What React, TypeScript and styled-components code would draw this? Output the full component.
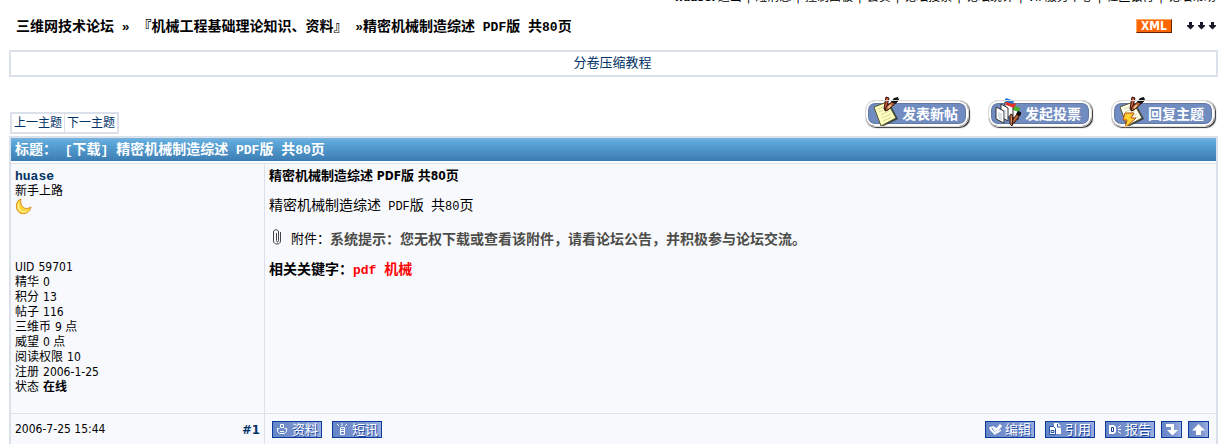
import React from "react";
import styled, { createGlobalStyle } from "styled-components";

const cjk = `"Noto Sans CJK SC", sans-serif`;
const line = "#dae1eb";
const navy = "#003366";

const GlobalStyle = createGlobalStyle`
  *, *::before, *::after { box-sizing: border-box; }
  body {
    margin: 0;
    background: #fff;
    color: #000;
    font: 12px/15px "DejaVu Sans Condensed", ${cjk};
    overflow-x: hidden;
  }
  a { color: inherit; text-decoration: none; }
  h1, h2, p, ul, dl, dd { margin: 0; padding: 0; }
  button { font: inherit; cursor: pointer; }
`;

const Page = styled.div`
  padding: 0 7px 0 9px;
`;

const UserNav = styled.nav`
  display: flex;
  justify-content: flex-end;
  gap: 5px;
  height: 16px;
  margin-top: -10px;
  padding-right: 2px;
  line-height: 15px;
  white-space: nowrap;
`;

const UserName = styled.strong`
  margin-right: -3px;
`;

const Header = styled.header`
  display: flex;
  justify-content: space-between;
  align-items: center;
  height: 40px;
  padding: 0 1px 0 7px;
`;

const Crumbs = styled.nav`
  font-family: ${cjk};
  font-size: 14px;
  font-weight: 700;
  line-height: 20px;
  white-space: pre;
`;

const Latin = styled.span<{ $size?: number }>`
  font-family: "Liberation Mono", monospace;
  font-size: ${(p) => p.$size ?? 13}px;
`;

const Feeds = styled.div`
  display: flex;
  align-items: center;
  gap: 15px;
`;

const XmlBadge = styled.a`
  display: block;
  width: 36px;
  height: 14px;
  background: #ff6600;
  border: 1px solid #ffaa66;
  border-right-color: #662200;
  border-bottom-color: #662200;
  color: #fff;
  font: 700 12px/12px "DejaVu Sans Condensed", sans-serif;
  text-align: center;
`;

const Notice = styled.section`
  height: 27px;
  margin-top: 4px;
  padding-right: 2px;
  border: 2px solid ${line};
  color: ${navy};
  font: 13px/20px ${cjk};
  text-align: center;
`;

const Toolbar = styled.div`
  display: flex;
  justify-content: space-between;
  align-items: flex-end;
  height: 59px;
  padding: 0 4px 1px 1px;
`;

const Pager = styled.nav`
  display: flex;
  border: 2px solid ${line};
  color: ${navy};
  line-height: 18px;
  margin-bottom: 1px;
`;

const PagerLink = styled.a`
  padding: 1px 2px 0;
  line-height: 17px;
  & + & { border-left: 1px solid ${line}; }
`;

const Actions = styled.div`
  display: flex;
  gap: 21px;
  margin-bottom: 9px;
`;

const ActionButton = styled.button`
  display: flex;
  align-items: center;
  width: 102px;
  height: 25px;
  padding: 0 0 2px;
  border: 2px solid #fff;
  border-radius: 9px;
  outline: 1px solid #d8d8d8;
  background: #708cc0;
  box-shadow: inset 0 0 0 1px #6478a4, 1px 1px 1px 1px #333;
  color: #fff;
  font: 700 14px/18px ${cjk};
  white-space: nowrap;
  svg { flex: none; margin: -2px 3px 0 2px; overflow: visible; }
`;

const Thread = styled.main`
  border: 2px solid ${line};
  border-bottom: 0;
  background: #f8f9fd;
`;

const ThreadTitle = styled.h1`
  height: 23px;
  padding-left: 4px;
  background: linear-gradient(#78b3dd 0, #5ca7d9 4px, #3c7db3 100%);
  color: #fff;
  font: 700 14px/20px ${cjk};
  white-space: pre;
`;

const Post = styled.article`
  display: grid;
  grid-template-columns: 254px 1fr;
  grid-template-rows: 250px 31px;
  border-top: 1px solid #fff;
  box-shadow: inset 0 1px 0 ${line};
  margin-top: 1px;
`;

const Author = styled.aside`
  padding: 6px 4px 0;
  border-right: 1px solid ${line};
`;

const AuthorName = styled.a`
  display: block;
  color: ${navy};
  font: 700 13px/15px "Liberation Mono", monospace;
`;

const Moon = styled.svg`
  display: block;
  width: 17px;
  height: 17px;
`;

const Stats = styled.dl`
  padding-top: 44px;
`;

const Stat = styled.div`
  display: flex;
  gap: 4px;
  white-space: pre;
`;

const StatValue = styled.dd<{ $bold?: boolean }>`
  font-weight: ${(p) => (p.$bold ? 700 : 400)};
`;

const Content = styled.section`
  padding: 4px 3px 0 4px;
`;

const Subject = styled.h2`
  font: 700 13px/16px ${cjk};
`;

const SubjectLatin = styled.span`
  font-family: "DejaVu Sans Condensed", sans-serif;
  font-size: 12px;
`;

const Message = styled.p`
  margin-top: 11px;
  font: 14px/18px ${cjk};
  white-space: pre;
`;

const Attachment = styled.p`
  display: flex;
  align-items: center;
  margin-top: 12px;
  font: 13px/20px ${cjk};
  svg { margin: 0 8px 3px 3px; }
`;

const Warning = styled.strong`
  color: #4c4c48;
  font-size: 14px;
`;

const Keywords = styled.p`
  margin-top: 10px;
  font: 700 14px/20px ${cjk};
  white-space: pre;
`;

const KeywordLink = styled.a`
  color: #ff0000;
`;

const FootCell = styled.footer<{ $divided?: boolean }>`
  display: flex;
  justify-content: space-between;
  align-items: center;
  padding: 1px ${(p) => (p.$divided ? 4 : 7)}px 0 ${(p) => (p.$divided ? 4 : 7)}px;
  border-top: 1px solid ${line};
  border-right: ${(p) => (p.$divided ? `1px solid ${line}` : "0")};
`;

const PostNumber = styled.a`
  color: ${navy};
  font-size: 13px;
  font-weight: 700;
`;

const ButtonRow = styled.div<{ $gap: number }>`
  display: flex;
  gap: ${(p) => p.$gap}px;
`;

const SmallButton = styled.button<{ $square?: boolean }>`
  display: flex;
  align-items: center;
  justify-content: center;
  gap: 3px;
  width: ${(p) => (p.$square ? 21 : 50)}px;
  height: 17px;
  padding: 0 0 ${(p) => (p.$square ? 0 : 2)}px;
  border: 1px solid #0c3a9c;
  background: linear-gradient(90deg, #6686c8, #7c94cc 60%, #9aaee0);
  color: #fff;
  font: 13px/13px ${cjk};
  text-shadow: 1px 1px 0 #1c48a4;
  white-space: nowrap;
  svg { flex: none; margin-top: ${(p) => (p.$square ? 0 : 2)}px; }
`;

const navItems = ["退出", "短消息", "控制面板", "会员", "论坛搜索", "论坛统计", "VIP服务中心", "社区银行", "论坛帮助"];

const stats: [string, string][] = [
  ["UID", "59701"],
  ["精华", "0"],
  ["积分", "13"],
  ["帖子", "116"],
  ["三维币", "9 点"],
  ["威望", "0 点"],
  ["阅读权限", "10"],
  ["注册", "2006-1-25"],
  ["状态", "在线"],
];

const DownArrows = () => (
  <svg width="30" height="8" viewBox="0 0 30 8" fill="#181828" aria-hidden="true">
    {[0, 11, 22].map((x) => (
      <path key={x} d={`M${x + 2} 0h3v3h2v1l-3.500 3.500L${x} 4V3h2z`} />
    ))}
  </svg>
);

const Tools = () => (
  <g>
    <path d="M16 -1l3 1-3 12-2-1z" fill="#d8583c" stroke="#301008" />
    <path d="M25 1l3 2-10 9-3 1 1-4z" fill="#b86438" stroke="#301008" />
    <path d="M24 0l4-1 1 3-4 4-4-2z" fill="#111" />
    <path d="M18 10l3-3" stroke="#f5c090" strokeWidth="2" />
  </g>
);

const NoteIcon = ({ bolt = false }: { bolt?: boolean }) => (
  <svg width="29" height="28" viewBox="0 0 29 28" aria-hidden="true">
    <path d="M5 10l15-4 8 15-16 8z" fill="#202010" opacity=".7" />
    <path d="M4 9l13-5 9 16-15 8z" fill={bolt ? "#fffef0" : "#ffffc0"} stroke="#55552c" />
    <path d="M8 11l8-3M9 14l9-4M11 17l8-4M12 20l9-4M13 23l9-4" stroke="#d5d8a0" />
    <Tools />
    {bolt && <path d="M9 15h9l-3 5h5L9 30l2-8H7z" fill="#ffd12e" stroke="#b84b16" />}
  </svg>
);

const VoteIcon = () => (
  <svg width="29" height="28" viewBox="0 0 29 28" aria-hidden="true">
    <path d="M17 7l8 4v11l-8-4z" fill="#fff" stroke="#333" />
    <path d="M17 9l2-2 8 3-1 4-9-3z" fill="#4bb02a" />
    <path d="M12 4l8 4v13l-8-4z" fill="#fff" stroke="#333" />
    <path d="M13 5l2-3 8 4-2 4-8-3z" fill="#e0332a" />
    <path d="M11 3l2-3 8 3-1 3z" fill="#1d78d8" />
    <path d="M8 6l7 4v13l-7-4z" fill="#fff" stroke="#333" />
    <path d="M3 9l8 4v12l-8-4z" fill="#fff" stroke="#333" />
    <path d="M6 14v7M8 15v7M12 12v8" stroke="#c0c4d4" />
    <path d="M17 17l2-1 1 9-1 3-2-2z" fill="#e09060" stroke="#301008" />
    <path d="M25 15l2 2-5 7-3 2 1-5z" fill="#b86438" stroke="#301008" />
    <path d="M25 13l3 1v3l-3 1-2-2z" fill="#111" />
  </svg>
);

const MoonIcon = () => (
  <Moon viewBox="0 0 17 17" role="img" aria-label="新手上路">
    <path d="M6 0C0 2 0 11 5 14c5 2 10-1 11-6-3 2-6 2-8 0S5 4 6 0z" fill="#ffd43c" stroke="#d98a16" />
    <path d="M4 4c-2 4 0 8 4 9 2 0 3 0 4-1" fill="none" stroke="#fff08a" strokeWidth="1.500" />
  </Moon>
);

const ClipIcon = () => (
  <svg width="11" height="16" viewBox="0 0 11 16" fill="none" stroke="#444" aria-hidden="true">
    <path d="M4.500 4v7.500c0 2 2 2 2 0V3c0-3-5-3-5 0v9c0 4 7 4 7 0V3" />
  </svg>
);

const smallIcons = {
  profile: (
    <g fill="none" stroke="#fff">
      <path d="M4.500 1.500h3v3h-3zM3.500 5.500h-2v3l2 2h5l2-2v-3h-2M4 8.500h4" />
    </g>
  ),
  phone: (
    <g fill="none" stroke="#fff">
      <path d="M4.500 4.500h4v7h-4zM5 6.500h3M5 8.500h3M1 1l2 2M6 0v3M11 1L9 3" />
    </g>
  ),
  edit: (
    <g fill="none" stroke="#fff">
      <path d="M1 5l3-1 2 4 5-6 1 1-6 8zM1 6l5 5M5 4l2 2M8 10l4-3" strokeWidth="1.500" />
    </g>
  ),
  quote: (
    <g>
      <path d="M5 0h4l3 3v8H5z" fill="#fff" />
      <path d="M.5 3.500h4l2 2v6h-6z" fill="#fff" stroke="#2850a8" />
      <path d="M8.500 1v3H12M2 7.500h3v2H2z" stroke="#2850a8" fill="none" />
    </g>
  ),
  report: (
    <g fill="none" stroke="#fff">
      <path d="M0 2h5l2 2v5l-2 2H0z" fill="#fff" stroke="none" />
      <path d="M2.500 4.500h2v4h-2z" stroke="#183c90" />
      <path d="M9 4.500l3-2M9 6.500h3M9 8.500l3 2" />
    </g>
  ),
};

const SmallIcon = ({ name }: { name: keyof typeof smallIcons }) => (
  <svg width="13" height="13" viewBox="0 0 13 13" aria-hidden="true">
    {smallIcons[name]}
  </svg>
);

const ArrowIcon = ({ up = false }: { up?: boolean }) => (
  <svg width="15" height="13" viewBox="0 0 15 13" fill="#fff" aria-hidden="true">
    {up ? <path d="M7.500 1L14 7.500h-4V12H5V7.500H1z" /> : <path d="M2 1h8v6h4l-5.500 5.500L3 7h4V4H2z" />}
  </svg>
);

export default function App() {
  return (
    <>
      <GlobalStyle />
      <Page>
        <UserNav aria-label="用户">
          <span>»</span>
          <UserName>huase:</UserName>
          {navItems.map((item, i) => (
            <React.Fragment key={item}>
              {i > 0 && <span>|</span>}
              <a href="#nav">{item}</a>
            </React.Fragment>
          ))}
        </UserNav>

        <Header>
          <Crumbs aria-label="位置">
            <a href="#home">三维网技术论坛</a>
            <Latin> » </Latin>
            <a href="#board">『机械工程基础理论知识、资料』</a>
            <Latin> »</Latin>
            精密机械制造综述<Latin> PDF</Latin>版<Latin> </Latin>共<Latin>80</Latin>页
          </Crumbs>
          <Feeds>
            <XmlBadge href="#rss">XML</XmlBadge>
            <DownArrows />
          </Feeds>
        </Header>

        <Notice>
          <a href="#guide">分卷压缩教程</a>
        </Notice>

        <Toolbar>
          <Pager aria-label="主题">
            <PagerLink href="#prev">上一主题</PagerLink>
            <PagerLink href="#next">下一主题</PagerLink>
          </Pager>
          <Actions>
            <ActionButton type="button"><NoteIcon />发表新帖</ActionButton>
            <ActionButton type="button"><VoteIcon />发起投票</ActionButton>
            <ActionButton type="button"><NoteIcon bolt />回复主题</ActionButton>
          </Actions>
        </Toolbar>

        <Thread>
          <ThreadTitle>
            标题：<Latin> [</Latin>下载<Latin>] </Latin>精密机械制造综述<Latin> PDF</Latin>版<Latin> </Latin>共<Latin>80</Latin>页
          </ThreadTitle>
          <Post>
            <Author>
              <AuthorName href="#user">huase</AuthorName>
              <p>新手上路</p>
              <MoonIcon />
              <Stats>
                {stats.map(([label, value]) => (
                  <Stat key={label}>
                    <dt>{label}</dt>
                    <StatValue $bold={value === "在线"}>{value}</StatValue>
                  </Stat>
                ))}
              </Stats>
            </Author>
            <Content>
              <Subject>
                精密机械制造综述<SubjectLatin> PDF</SubjectLatin>版<SubjectLatin> </SubjectLatin>共<SubjectLatin>80</SubjectLatin>页
              </Subject>
              <Message>
                精密机械制造综述<Latin $size={12}> PDF</Latin>版<Latin $size={12}> </Latin>共<Latin $size={12}>80</Latin>页
              </Message>
              <Attachment>
                <ClipIcon />
                附件：<Warning>系统提示：您无权下载或查看该附件，请看论坛公告，并积极参与论坛交流。</Warning>
              </Attachment>
              <Keywords>
                相关关键字：<KeywordLink href="#pdf"><Latin>pdf</Latin></KeywordLink>
                <Latin> </Latin>
                <KeywordLink href="#machine">机械</KeywordLink>
              </Keywords>
            </Content>
            <FootCell $divided>
              <time>2006-7-25 15:44</time>
              <PostNumber href="#1">#1</PostNumber>
            </FootCell>
            <FootCell>
              <ButtonRow $gap={10}>
                <SmallButton type="button"><SmallIcon name="profile" />资料</SmallButton>
                <SmallButton type="button"><SmallIcon name="phone" />短讯</SmallButton>
              </ButtonRow>
              <ButtonRow $gap={6}>
                <ButtonRow $gap={10}>
                  <SmallButton type="button"><SmallIcon name="edit" />编辑</SmallButton>
                  <SmallButton type="button"><SmallIcon name="quote" />引用</SmallButton>
                  <SmallButton type="button"><SmallIcon name="report" />报告</SmallButton>
                </ButtonRow>
                <SmallButton type="button" $square aria-label="底部"><ArrowIcon /></SmallButton>
                <SmallButton type="button" $square aria-label="顶部"><ArrowIcon up /></SmallButton>
              </ButtonRow>
            </FootCell>
          </Post>
        </Thread>
      </Page>
    </>
  );
}
